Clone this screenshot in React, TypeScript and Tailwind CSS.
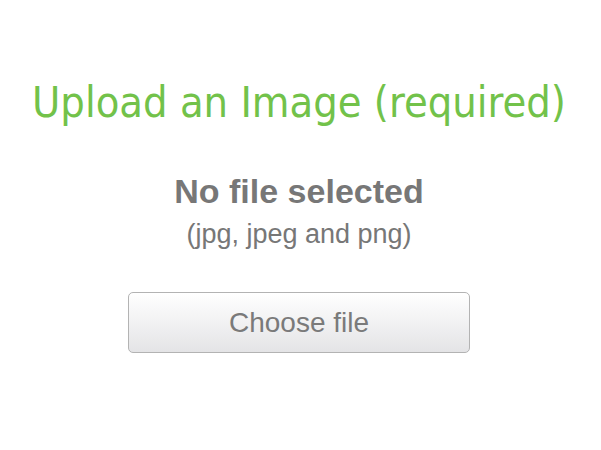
export default function App() {
  return (
    <div className="flex h-[450px] w-[601px] flex-col items-center bg-white pr-[3px] font-['Liberation_Sans',Arial,sans-serif]">
      <h1 className="mt-[81px] whitespace-nowrap font-['DejaVu_Sans_Condensed','DejaVu_Sans',Tahoma,sans-serif] text-[43px] leading-none text-[#72c24a]">
        Upload an Image (required)
      </h1>
      <p className="mt-[50px] text-[34px] font-bold leading-none text-[#777777]">No file selected</p>
      <p className="mt-[13px] text-[27px] leading-none text-[#777777]">(jpg, jpeg and png)</p>
      <button className="mt-[44px] h-[61px] w-[342px] rounded-[5px] border border-[#b3b3b3] bg-gradient-to-b from-white to-[#e4e4e6] text-[28px] text-[#7a7a7a]">
        Choose file
      </button>
    </div>
  );
}
